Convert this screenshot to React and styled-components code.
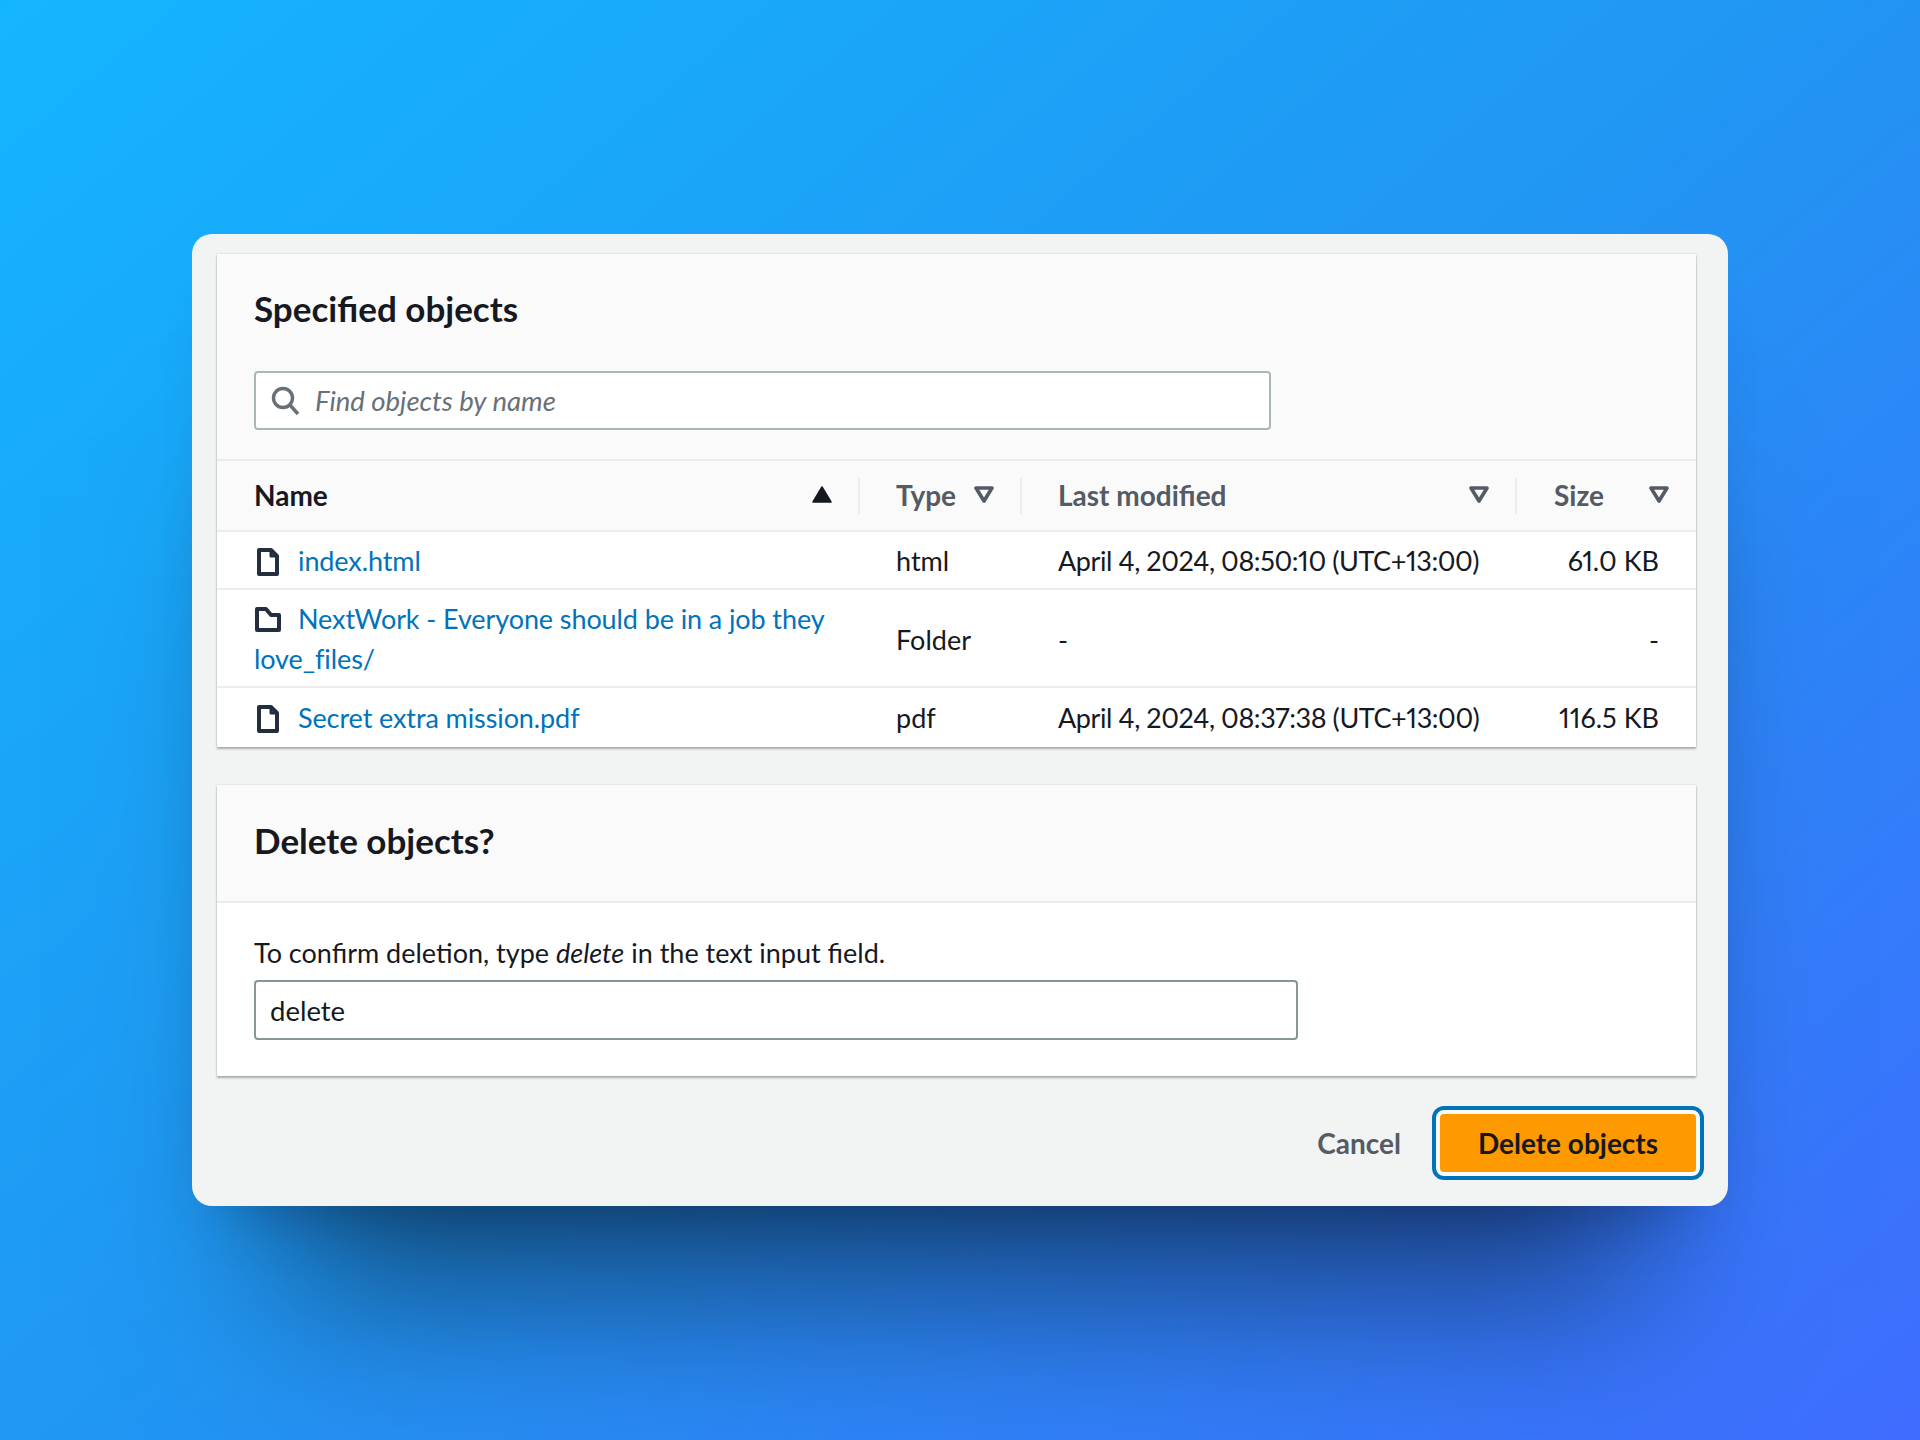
import React from 'react'
import styled, { createGlobalStyle } from 'styled-components'

const GlobalStyle = createGlobalStyle`
  html, body { margin: 0; padding: 0; }
  body { font-family: Lato, "Noto Sans", sans-serif; color: #16191f; font-feature-settings: "pnum"; }
`

const Page = styled.div`
  width: 1920px;
  height: 1440px;
  padding-top: 234px;
  box-sizing: border-box;
  overflow: hidden;
  background: linear-gradient(140deg, #14b5ff 0%, #2196f3 50%, #3f6cff 100%);
`

const Modal = styled.div`
  width: 1536px;
  height: 972px;
  margin-left: 192px;
  padding: 20px 32px 0 25px;
  box-sizing: border-box;
  background: #f2f3f3;
  border-radius: 20px;
  box-shadow: 0 172px 160px -88px rgba(0, 0, 0, 0.5), 0 40px 60px -40px rgba(0, 0, 40, 0.3);
`

const Card = styled.section`
  background: #fff;
  box-shadow: 0 2px 2px rgba(0, 28, 36, 0.3), 0 0 2px rgba(0, 28, 36, 0.15);
  margin-bottom: 38px;
`

const Header = styled.div`
  background: #fafafa;
  padding: ${p => p.$pad};
  border-bottom: 2px solid #eaeded;
  box-sizing: border-box;
  height: ${p => p.$h}px;
`

const Title = styled.h2`
  margin: 0;
  font-size: 35px;
  line-height: 44px;
  font-weight: 700;
`

const SearchBox = styled.div`
  width: 1017px;
  height: 59px;
  margin-top: 41px;
  padding-left: 15px;
  display: flex;
  align-items: center;
  gap: 14px;
  box-sizing: border-box;
  background: #fff;
  border: 2px solid #aab7b8;
  border-radius: 4px;
  font-size: 27.5px;
  font-style: italic;
  color: #687078;
`

const Row = styled.div`
  display: grid;
  grid-template-columns: 643px 162px 495px 179px;
  align-items: center;
  min-height: ${p => p.$h}px;
  box-sizing: border-box;
  border-bottom: ${p => (p.$last ? '0' : '2px solid #eaeded')};
  background: ${p => (p.$head ? '#fafafa' : '#fff')};
  font-size: ${p => (p.$head ? 28 : 27)}px;
  line-height: 40px;
`

const HeadCell = styled.div`
  height: 36px;
  display: flex;
  align-items: center;
  justify-content: space-between;
  box-sizing: border-box;
  padding: 0 ${p => p.$pr}px 2px ${p => p.$pl}px;
  border-right: ${p => (p.$end ? '0' : '2px solid #eaeded')};
  font-weight: 700;
  color: ${p => (p.$active ? '#16191f' : '#545b64')};
`

const Cell = styled.div`
  padding-left: ${p => p.$pl}px;
  padding-right: ${p => p.$pr || 0}px;
  padding-top: ${p => p.$pt || 0}px;
  text-align: ${p => p.$align || 'left'};
`

const DateCell = styled(Cell)`
  letter-spacing: -0.42px;
`

const FileLink = styled.a`
  color: #0073bb;
  letter-spacing: -0.1px;
`

const IconWrap = styled.svg`
  width: 28px;
  height: 28px;
  margin-right: 16px;
  vertical-align: -5px;
  fill: none;
  stroke: #232f3e;
  stroke-width: 4;
  stroke-linejoin: round;
`

const ConfirmBody = styled.div`
  height: 173px;
  padding: 30px 37px 0;
  box-sizing: border-box;
`

const ConfirmLabel = styled.div`
  font-size: 27px;
  line-height: 40px;
`

const ConfirmInput = styled.div`
  width: 1044px;
  height: 60px;
  margin-top: 7px;
  padding-left: 14px;
  display: flex;
  align-items: center;
  box-sizing: border-box;
  border: 2px solid #879596;
  border-radius: 4px;
  font-size: 27.5px;
`

const Footer = styled.div`
  display: flex;
  justify-content: flex-end;
  align-items: center;
  gap: 39px;
`

const CancelButton = styled.button`
  border: 0;
  background: none;
  padding: 0;
  font: 700 28px Lato, sans-serif;
  color: #545b64;
`

const DeleteButton = styled.button`
  width: 256px;
  height: 58px;
  padding: 0;
  background: #ff9900;
  border: 0;
  border-radius: 4px;
  box-shadow: 0 0 0 4px #fafafa;
  outline: 4px solid #0073bb;
  outline-offset: 4px;
  font: 700 28px Lato, sans-serif;
  color: #16191f;
`

const Search = () => (
  <svg width="30" height="30" viewBox="0 0 30 30" fill="none" stroke="#687078" strokeWidth="3.4">
    <circle cx="12" cy="12" r="9.5" />
    <path d="M19 19 L27 28" />
  </svg>
)

const FileIcon = () => (
  <IconWrap viewBox="0 0 28 28">
    <path d="M5 2 H17 L23 8 V26 H5 Z" />
    <path d="M17 2 V8 H23" strokeWidth="3" />
  </IconWrap>
)

const FolderIcon = () => (
  <IconWrap viewBox="0 0 28 28">
    <path d="M3 3 H12 L17 9 H25 V24 H3 Z" />
  </IconWrap>
)

const SortIcon = ({ up }) =>
  up ? (
    <svg width="20" height="17" viewBox="0 0 20 17">
      <path d="M10 1 L19 16 H1 Z" fill="#16191f" stroke="#16191f" strokeWidth="1.5" strokeLinejoin="round" />
    </svg>
  ) : (
    <svg width="20" height="17" viewBox="0 0 20 17">
      <path d="M2 2 H18 L10 15 Z" fill="none" stroke="#545b64" strokeWidth="3.6" strokeLinejoin="round" />
    </svg>
  )

const files = [
  { name: 'index.html', icon: FileIcon, type: 'html', date: 'April 4, 2024, 08:50:10 (UTC+13:00)', size: '61.0 KB', h: 58, pt: 1, namePt: 1 },
  { name: 'NextWork - Everyone should be in a job they love_files/', icon: FolderIcon, type: 'Folder', date: '-', size: '-', h: 98, pt: 4, namePt: 2 },
  { name: 'Secret extra mission.pdf', icon: FileIcon, type: 'pdf', date: 'April 4, 2024, 08:37:38 (UTC+13:00)', size: '116.5 KB', h: 59, last: true },
]

export default function App() {
  return (
    <Page>
      <GlobalStyle />
      <Modal>
        <Card>
          <Header $h={207} $pad="32px 37px 0">
            <Title>Specified objects</Title>
            <SearchBox>
              <Search />
              Find objects by name
            </SearchBox>
          </Header>
          <Row $head $h={71}>
            <HeadCell $pl={37} $pr={26} $active>
              Name <SortIcon up />
            </HeadCell>
            <HeadCell $pl={36} $pr={26}>
              Type <SortIcon />
            </HeadCell>
            <HeadCell $pl={36} $pr={26}>
              Last modified <SortIcon />
            </HeadCell>
            <HeadCell $pl={37} $pr={27} $end>
              Size <SortIcon />
            </HeadCell>
          </Row>
          {files.map(f => (
            <Row key={f.name} $h={f.h} $last={f.last}>
              <Cell $pl={37} $pr={10} $pt={f.namePt}>
                <f.icon />
                <FileLink>{f.name}</FileLink>
              </Cell>
              <Cell $pl={36} $pt={f.pt}>{f.type}</Cell>
              <DateCell $pl={36} $pt={f.pt}>{f.date}</DateCell>
              <Cell $pr={37} $pt={f.pt} $align="right">{f.size}</Cell>
            </Row>
          ))}
        </Card>
        <Card>
          <Header $h={118} $pad="33px 37px 0">
            <Title>Delete objects?</Title>
          </Header>
          <ConfirmBody>
            <ConfirmLabel>
              To confirm deletion, type <em>delete</em> in the text input field.
            </ConfirmLabel>
            <ConfirmInput>delete</ConfirmInput>
          </ConfirmBody>
        </Card>
        <Footer>
          <CancelButton>Cancel</CancelButton>
          <DeleteButton>Delete objects</DeleteButton>
        </Footer>
      </Modal>
    </Page>
  )
}
